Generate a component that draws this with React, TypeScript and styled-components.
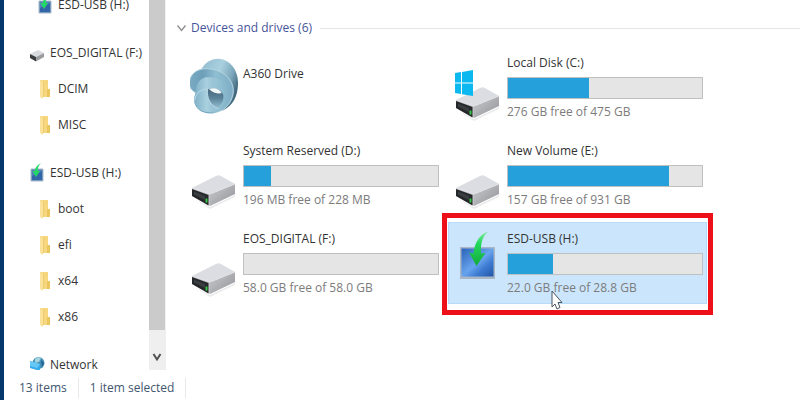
import React from "react";
import styled, { createGlobalStyle, css } from "styled-components";

const GlobalStyle = createGlobalStyle`
  * { box-sizing: border-box; }
  body {
    margin: 0;
    background: #fff;
    font-family: "Open Sans", "Noto Sans", sans-serif;
    font-size: 12px;
    line-height: 22px;
    color: #333;
  }
  button { font: inherit; color: inherit; background: none; border: 0; padding: 0; text-align: left; }
`;

const Window = styled.div`
  display: flex;
  flex-direction: column;
  height: 100vh;
  overflow: hidden;
  border-left: 4px solid #06376c;
`;

const Body = styled.div`
  display: flex;
  flex: 1;
  min-height: 0;
`;

const Sidebar = styled.nav`
  width: 145px;
  overflow: hidden;
`;

const Tree = styled.div`
  display: flex;
  flex-direction: column;
  gap: 12px;
  margin-top: -13px;
`;

const Branch = styled.ul`
  list-style: none;
  margin: 0;
  padding: 0;
`;

const TreeItem = styled.button<{ $nested?: boolean }>`
  display: flex;
  align-items: center;
  gap: 5px;
  width: 100%;
  height: 36px;
  padding-left: ${(p) => (p.$nested ? 33 : 25)}px;
  white-space: nowrap;

  svg { flex: none; }
`;

const Scrollbar = styled.div`
  display: flex;
  flex-direction: column;
  width: 16px;
  background: #efefef;
`;

const Thumb = styled.div`
  flex: 1;
  margin-bottom: 14px;
  background: #cbcbcb;
`;

const ScrollButton = styled.button`
  display: flex;
  align-items: center;
  justify-content: center;
  height: 26px;
`;

const Main = styled.main`
  flex: 1;
  min-width: 0;
  padding: 17px 0 0 10px;
  border-left: 1px solid #f0f0f0;
`;

const GroupHeader = styled.h2`
  display: flex;
  align-items: center;
  margin: 0 0 7px;
  font-size: 12px;
  font-weight: 400;
  color: #45549a;

  &::after {
    content: "";
    flex: 1;
    height: 1px;
    margin-left: 8px;
    background: #e6e6e6;
  }
`;

const GroupToggle = styled.button`
  display: flex;
  align-items: center;
  gap: 4px;
`;

const Tiles = styled.div`
  display: grid;
  grid-template-columns: repeat(auto-fill, 259px);
  gap: 6px 5px;
  padding-left: 8px;
`;

const Tile = styled.button<{ $selected?: boolean }>`
  position: relative;
  display: flex;
  gap: 5px;
  height: 82px;
  padding: 0 4px 0 6px;
  ${(p) =>
    p.$selected &&
    css`
      background: #cbe6fc;
      box-shadow: inset 0 0 0 1px #b5dbf8;
    `}

  svg { flex: none; }
`;

const Marker = styled.span`
  position: absolute;
  inset: -9px -6px -11px;
  border: 5px solid #ee1019;
  box-shadow: inset 0 0 0 1px #fff;
`;

const Pointer = styled.span`
  position: absolute;
  left: 103px;
  top: 68px;
  line-height: 0;
`;

const Details = styled.span<{ $plain?: boolean }>`
  display: flex;
  flex-direction: column;
  flex: 1;
  padding-top: ${(p) => (p.$plain ? 17 : 6)}px;
  white-space: nowrap;
`;

const Capacity = styled.span`
  height: 22px;
  margin: 3px 0 2px;
  background: #e5e5e5;
  border: 1px solid #c0c0c0;
`;

const Used = styled.span`
  display: block;
  height: 100%;
  background: #26a0da;
`;

const Free = styled.span`
  color: #7c7c7c;
`;

const StatusBar = styled.footer`
  display: flex;
  align-items: center;
  height: 30px;
  padding: 5px 0 0 4px;
  color: #42566f;
`;

const Status = styled.span`
  padding: 0 11px;
  border-right: 1px solid #e9e9e9;
  line-height: 20px;
`;

function Disk() {
  return (
    <g>
      <path d="M4 65 20 73 45 61v2L20 75z" fill="#000" opacity=".08" />
      <path d="M2 54 27 41.500Q29 41 31 42L45 50 20 60z" fill="#dcdde2" />
      <path d="M20 60 45 50v10L20 72z" fill="url(#diskSide)" />
      <path d="M2 54 20 60v12L2 62z" fill="#c2c3c7" />
      <path d="M2 55 18.500 61v10.500L2 62z" fill="#25282a" />
      <path d="M4 57.500 15 62v4L4 60.500z" fill="#3a3e40" />
      <path d="M15.500 64.500h2v4h-2z" fill="#35c845" />
      <path d="M2 54 20 60 45 50" fill="none" stroke="#e6e6ea" strokeWidth=".8" />
    </g>
  );
}

function Defs() {
  return (
    <defs>
      <linearGradient id="diskSide" x1="0" y1="0" x2="1" y2="1">
        <stop offset="0" stopColor="#c9cace" />
        <stop offset="1" stopColor="#919398" />
      </linearGradient>
      <linearGradient id="screen" x1="0" y1="0" x2="1" y2="1">
        <stop offset="0" stopColor="#2a62b8" />
        <stop offset=".5" stopColor="#68a4ee" />
        <stop offset=".7" stopColor="#3d7cd2" />
        <stop offset="1" stopColor="#2355a8" />
      </linearGradient>
      <linearGradient id="arrow" x1="0" y1="0" x2="0" y2="1">
        <stop offset="0" stopColor="#7eeaa0" />
        <stop offset=".35" stopColor="#22d85c" />
        <stop offset="1" stopColor="#12a83c" />
      </linearGradient>
      <linearGradient id="knotBack" x1="0" y1="0" x2="1" y2=".5">
        <stop offset="0" stopColor="#8fbace" />
        <stop offset=".5" stopColor="#a9d0df" />
        <stop offset=".8" stopColor="#7ba6bb" />
        <stop offset="1" stopColor="#446b80" />
      </linearGradient>
      <linearGradient id="knotFront" x1="0" y1="0" x2="1" y2="0">
        <stop offset="0" stopColor="#7babc3" />
        <stop offset=".3" stopColor="#6d9fb9" />
        <stop offset=".6" stopColor="#90bed2" />
        <stop offset="1" stopColor="#7dadc4" />
      </linearGradient>
      <linearGradient id="knotTube" x1="0" y1="0" x2="1" y2="0">
        <stop offset="0" stopColor="#7fb0c7" />
        <stop offset=".35" stopColor="#a9d0df" />
        <stop offset="1" stopColor="#8cbbcf" stopOpacity="0" />
      </linearGradient>
      <linearGradient id="knotHole" x1="0" y1="0" x2="0" y2="1">
        <stop offset="0" stopColor="#46677c" />
        <stop offset=".5" stopColor="#5b8299" />
        <stop offset="1" stopColor="#93bed1" />
      </linearGradient>
    </defs>
  );
}

function DriveIcon({ kind }: { kind: Kind }) {
  return (
    <svg width="48" height="82" viewBox="0 0 48 82" aria-hidden="true">
      <Defs />
      {(kind === "disk" || kind === "system") && <Disk />}
      {kind === "system" && (
        <g fill="#0bb8f0">
          <path d="M1 27 7 26v10.500H1zM8 26 19 24v12.500H8zM1 37.500h6v10.500L1 47zM8 37.500h11V50L8 48.200z" />
        </g>
      )}
      {kind === "usb" && (
        <g>
          <path d="M6 25h35v32H6z" fill="#a9b6c6" />
          <path d="M7.500 26.500h32v28h-32z" fill="url(#screen)" />
          <path
            d="M34 9.500C27 12 20.500 19 19.500 31.500L15 30.500 22.500 44 31.500 31 27 31.500C26.500 22 28 15 34 9.500z"
            fill="url(#arrow)"
          />
        </g>
      )}
      {kind === "cloud" && (
        <g transform="translate(-5 4) scale(.3333)">
          <path d="M46 64C58 36 80 25 102 26 138 30 160 62 159 102 158 138 146 166 112 182L60 120z" fill="url(#knotBack)" />
          <path
            d="M32 128C16 120 12 108 13 96 16 70 38 56 64 56 108 56 144 84 146 122 146 152 124 180 90 189 58 196 30 180 28 154Q27 140 32 128z"
            fill="url(#knotFront)"
          />
          <path d="M32 128C32 104 42 88 62 82 96 78 130 94 134 126 134 150 118 172 96 182 60 194 30 180 28 154Q27 140 32 128z" fill="url(#knotTube)" />
          <path d="M67 118C88 110 112 120 115 136 117 152 108 166 98 174 76 164 64 142 67 118z" fill="url(#knotHole)" />
          <path d="M72 117C86 112 104 117 110 130 98 132 82 128 72 117z" fill="#f1f7f8" />
          <path d="M29 152C32 130 46 117 68 117 64 144 76 168 100 176" fill="none" stroke="#b9d9e5" strokeWidth="3" />
          <path d="M32 128C16 120 12 108 13 96 16 70 38 56 64 56 108 56 144 84 145 122 144 152 124 178 98 186" fill="none" stroke="#b5d5e1" strokeWidth="3" />
        </g>
      )}
    </svg>
  );
}

function UsbSmall() {
  return (
    <svg width="16" height="20" viewBox="-1 0 16 20" aria-hidden="true">
      <path d="M1 6h12v12H1z" fill="#5284b9" stroke="#a9b8c7" />
      <path d="M2 13 12 8v9H2z" fill="#3365a9" />
      <path d="M11 0Q5 3 5 8H2.500L6 14 10 8H8Q7 4 11 0z" fill="#22d866" />
    </svg>
  );
}

function DiskSmall() {
  return (
    <svg width="16" height="20" viewBox="0 0 16 20" aria-hidden="true">
      <path d="M1 11 9 7l6 3-8 4z" fill="#d9dade" />
      <path d="M7 14 15 10v4l-8 4.500z" fill="#9c9da1" />
      <path d="M1 11 7 14v4.500L1 15z" fill="#3a3d3e" />
    </svg>
  );
}

function Folder() {
  return (
    <svg width="16" height="22" viewBox="-1 0 16 22" aria-hidden="true">
      <path d="M2 2h8v17H2z" fill="#f6d77e" />
      <path d="M9 11h3v8H9z" fill="#edc55f" />
      <path d="M2 2 5 4v17l-3-2z" fill="#fae29b" />
      <path d="M5.500 4v15" stroke="#eecb70" />
    </svg>
  );
}

function NetworkIcon() {
  return (
    <svg width="16" height="20" viewBox="0 0 16 20" aria-hidden="true">
      <circle cx="9.500" cy="8" r="6" fill="#4492b8" />
      <path d="M6 4Q9 1 12 3L10 7 6 8z" fill="#a4d5df" />
      <path d="M12 5 15 8 13 12z" fill="#215d8d" />
      <path d="M1 6 11 9v7L1 13z" fill="#37aae9" />
      <path d="M1 6 11 9 8 13 1 11z" fill="#66c8f5" />
    </svg>
  );
}

type Kind = "cloud" | "system" | "disk" | "usb";
type Drive = { name: string; kind: Kind; used?: number; free?: string; selected?: boolean };

const drives: Drive[] = [
  { name: "A360 Drive", kind: "cloud" },
  { name: "Local Disk (C:)", kind: "system", used: 42, free: "276 GB free of 475 GB" },
  { name: "System Reserved (D:)", kind: "disk", used: 14, free: "196 MB free of 228 MB" },
  { name: "New Volume (E:)", kind: "disk", used: 83, free: "157 GB free of 931 GB" },
  { name: "EOS_DIGITAL (F:)", kind: "disk", used: 0, free: "58.0 GB free of 58.0 GB" },
  { name: "ESD-USB (H:)", kind: "usb", used: 23, free: "22.0 GB free of 28.8 GB", selected: true },
];

const branches = [
  { name: "EOS_DIGITAL (F:)", icon: <DiskSmall />, folders: ["DCIM", "MISC"] },
  { name: "ESD-USB (H:)", icon: <UsbSmall />, folders: ["boot", "efi", "x64", "x86"] },
  { name: "Network", icon: <NetworkIcon />, folders: [] },
];

export default function App() {
  return (
    <>
      <GlobalStyle />
      <Window>
        <Body>
          <Sidebar aria-label="Folders">
            <Tree>
              <TreeItem $nested>
                <UsbSmall />
                ESD-USB (H:)
              </TreeItem>
              {branches.map((branch) => (
                <Branch key={branch.name}>
                  <li>
                    <TreeItem>
                      {branch.icon}
                      {branch.name}
                    </TreeItem>
                  </li>
                  {branch.folders.map((folder) => (
                    <li key={folder}>
                      <TreeItem $nested>
                        <Folder />
                        {folder}
                      </TreeItem>
                    </li>
                  ))}
                </Branch>
              ))}
            </Tree>
          </Sidebar>
          <Scrollbar>
            <Thumb />
            <ScrollButton aria-label="Scroll down">
              <svg width="10" height="10" viewBox="0 0 10 10" aria-hidden="true">
                <path d="M1.500 2 5 7.500 8.500 2" fill="none" stroke="#505050" strokeWidth="2" />
              </svg>
            </ScrollButton>
          </Scrollbar>
          <Main>
            <GroupHeader>
              <GroupToggle aria-expanded="true">
                <svg width="11" height="10" viewBox="0 0 11 10" aria-hidden="true">
                  <path d="M1.500 2.500 5.500 7.500 9.500 2.500" fill="none" stroke="#8c8c8c" strokeWidth="1.300" />
                </svg>
                Devices and drives (6)
              </GroupToggle>
            </GroupHeader>
            <Tiles>
              {drives.map((drive) => (
                <Tile key={drive.name} $selected={drive.selected}>
                  <DriveIcon kind={drive.kind} />
                  <Details $plain={!drive.free}>
                    <span>{drive.name}</span>
                    {drive.free && (
                      <>
                        <Capacity>
                          <Used style={{ width: `${drive.used}%` }} />
                        </Capacity>
                        <Free>{drive.free}</Free>
                      </>
                    )}
                  </Details>
                  {drive.selected && (
                    <>
                      <Marker />
                      <Pointer>
                        <svg width="12" height="20" viewBox="0 0 12 20" aria-hidden="true">
                          <path d="M1 1v16l3-3 2 5 3-1.500-2-5h4z" fill="#fff" stroke="#4b5560" />
                        </svg>
                      </Pointer>
                    </>
                  )}
                </Tile>
              ))}
            </Tiles>
          </Main>
        </Body>
        <StatusBar>
          <Status>13 items</Status>
          <Status>1 item selected</Status>
        </StatusBar>
      </Window>
    </>
  );
}
